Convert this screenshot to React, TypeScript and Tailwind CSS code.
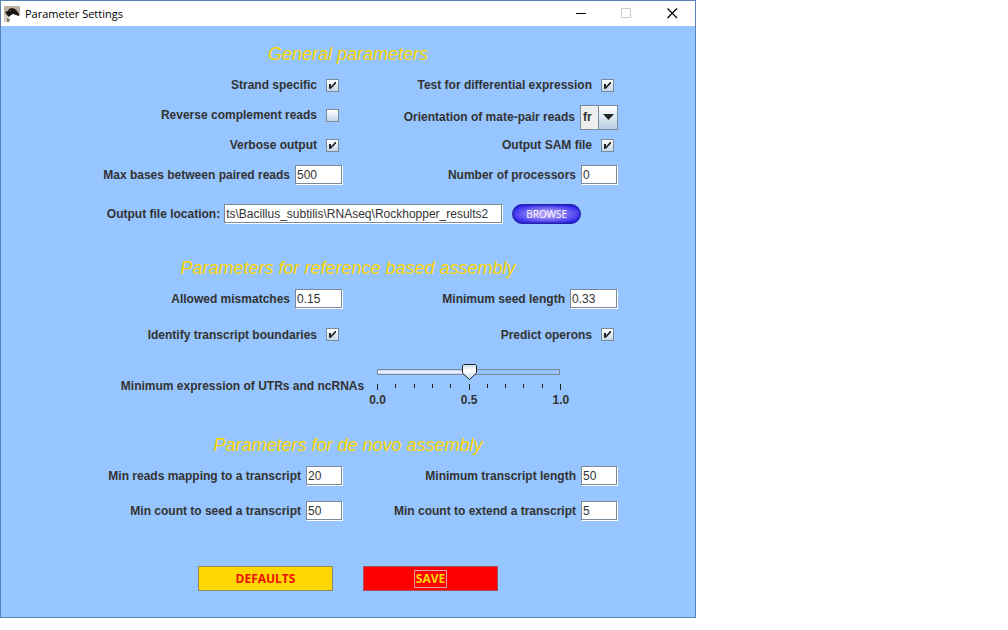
import { useEffect, useId, useRef, useState } from "react";
import type { ReactNode } from "react";

function Heading({ children }: { children: ReactNode }) {
  return (
    <h2 className="pt-px text-center text-[18px] leading-6 font-normal text-[#ffd700] italic">{children}</h2>
  );
}

function Pair({ children, tall = false }: { children: ReactNode; tall?: boolean }) {
  return (
    <div className={tall ? "grid h-[35px] grid-cols-2 items-center" : "grid h-[30px] grid-cols-2 items-center"}>
      {children}
    </div>
  );
}

function CheckField({ label, checked = false }: { label: string; checked?: boolean }) {
  const [on, setOn] = useState(checked);
  return (
    <label className="flex items-center justify-end gap-[9px] pr-1">
      {label}
      <span className="grid size-[13px]">
        <input
          type="checkbox"
          checked={on}
          onChange={(e) => setOn(e.target.checked)}
          className="col-start-1 row-start-1 size-[13px] appearance-none border border-[#7a8a99] bg-linear-to-b from-white to-[#c3d8ea]"
        />
        {on && (
          <svg viewBox="0 0 13 13" className="pointer-events-none col-start-1 row-start-1 size-[13px]" aria-hidden="true">
            <path d="M3 5h2v2.600L9 3h1v1.600L5 9.800H3z" fill="#222" />
          </svg>
        )}
      </span>
    </label>
  );
}

const fieldStyle =
  "h-5 border border-t-[#7a8a99] border-l-[#7a8a99] border-r-white border-b-white bg-white pl-px text-[12px] font-normal leading-4 text-[#333] shadow-[inset_-1px_-1px_0_#7a8a99] outline-none";

function TextField({ label, value, wide = false }: { label: string; value: string; wide?: boolean }) {
  const id = useId();
  return (
    <div className="flex items-center justify-end gap-[5px]">
      <label htmlFor={id}>{label}</label>
      <input
        id={id}
        type="text"
        defaultValue={value}
        className={wide ? `${fieldStyle} w-12` : `${fieldStyle} w-[37px]`}
      />
    </div>
  );
}

function OrientationField() {
  return (
    <div className="flex items-center justify-end gap-[5px] pt-1">
      <label htmlFor="orientation">Orientation of mate-pair reads</label>
      <span className="grid h-[25px] w-[38px]">
        <select
          id="orientation"
          defaultValue="fr"
          className="col-start-1 row-start-1 appearance-none border border-[#7a8a99] bg-[#eeeeee] pl-0.5 text-[12px] font-bold text-[#333] outline-none"
        >
          <option>fr</option>
          <option>rf</option>
          <option>ff</option>
        </select>
        <span className="pointer-events-none col-start-1 row-start-1 grid w-5 place-items-center justify-self-end border border-[#7a8a99] bg-linear-to-b from-white to-[#b8cfe5]">
          <svg viewBox="0 0 11 6" className="h-[6px] w-[11px]" aria-hidden="true">
            <path d="M0 0h11L5.500 6z" fill="#222" />
          </svg>
        </span>
      </span>
    </div>
  );
}

function OutputField() {
  const field = useRef<HTMLInputElement>(null);

  // Keep the end of the path, the most telling part, in view.
  useEffect(() => {
    if (field.current) field.current.scrollLeft = field.current.scrollWidth;
  }, []);

  return (
    <div className="flex items-center justify-center pt-3.5 pr-2">
      <label htmlFor="output">Output file location:</label>
      <input
        ref={field}
        id="output"
        type="text"
        defaultValue="ts\Bacillus_subtilis\RNAseq\Rockhopper_results2"
        className={`${fieldStyle} ml-1 w-[279px] pr-px`}
      />
      <button
        type="button"
        className="ml-[9px] h-5 w-[69px] rounded-full border border-[#2420a8] bg-[radial-gradient(ellipse_at_center,#bcaaf8_0%,#8a7cf4_35%,#3a30f0_75%,#2018d8_100%)] font-['Open_Sans','Noto_Sans',sans-serif] text-[10px] leading-4 font-normal text-white shadow-[inset_0_0_2px_#10108c]"
      >
        BROWSE
      </button>
    </div>
  );
}

function ExpressionSlider() {
  const [value, setValue] = useState(0.5);
  const ticks = Array.from({ length: 11 }, (_, i) => i);
  const x = 9 + value * 183;
  return (
    <div className="flex items-center justify-center pr-1.5">
      <label htmlFor="expression">Minimum expression of UTRs and ncRNAs</label>
      <div className="relative ml-[5px] w-[200px]">
        <svg viewBox="0 0 200 28" className="block h-7 w-[200px]" aria-hidden="true">
          <defs>
            <linearGradient id="fill" x1="0" y1="0" x2="0" y2="1">
              <stop offset="0" stopColor="#b9d2f0" />
              <stop offset="0.500" stopColor="#f4f9ff" />
              <stop offset="1" stopColor="#bcd4ef" />
            </linearGradient>
            <linearGradient id="thumb" x1="0" y1="0" x2="0" y2="1">
              <stop offset="0" stopColor="#c8dcf0" />
              <stop offset="0.400" stopColor="#ffffff" />
              <stop offset="1" stopColor="#c8dcf0" />
            </linearGradient>
          </defs>
          <rect x="8.500" y="5.500" width="182" height="5" fill="none" stroke="#7a8a99" />
          <rect x="9" y="6" width={x - 9} height="4" fill="url(#fill)" />
          <path d={`M${x - 7} 1.500l1-1h12l1 1v7.500L${x} 15.500L${x - 7} 9z`} fill="url(#thumb)" stroke="#222" />
          {ticks.map((i) => (
            <rect key={i} x={8 + Math.round(i * 18.3)} y="20" width="1" height={i % 5 === 0 ? 6 : 4} fill="#222" />
          ))}
        </svg>
        <input
          id="expression"
          type="range"
          min={0}
          max={1}
          step={0.01}
          value={value}
          onChange={(e) => setValue(Number(e.target.value))}
          className="absolute inset-x-0 top-0 h-4 w-full opacity-0"
        />
        <div className="flex justify-between leading-4" aria-hidden="true">
          <span>0.0</span>
          <span>0.5</span>
          <span>1.0</span>
        </div>
      </div>
    </div>
  );
}

function TitleBar() {
  return (
    <header className="flex h-[25px] items-center bg-white pl-[3px] text-black">
      <svg viewBox="0 0 16 16" className="size-4" aria-hidden="true">
        <rect width="16" height="16" fill="#bdb09f" />
        <rect y="9" width="5" height="7" fill="#d8cfc2" />
        <path d="M5 9l3-2 4 1 4 2v6H5l-1-2z" fill="#fff" />
        <path d="M1 6l3-1 1-2 3-1 3 1 2 2 2 3v2l-3-1-3-1-2 1-2 2-2-2-1-2z" fill="#17130f" />
        <path d="M3 12l3 1-1 3H3z" fill="#8a7766" />
        <path d="M6 4h1v1H6z" fill="#b8734a" />
      </svg>
      <h1 className="grow pl-[5px] font-['Open_Sans','Noto_Sans',sans-serif] text-[11px] leading-4 font-normal">
        Parameter Settings
      </h1>
      <button type="button" aria-label="Minimize" className="grid h-full w-[45px] place-items-center">
        <svg viewBox="0 0 11 11" className="size-[11px]" aria-hidden="true">
          <path d="M0 5.500h10" stroke="#000" />
        </svg>
      </button>
      <button type="button" aria-label="Maximize" disabled className="grid h-full w-[45px] place-items-center">
        <svg viewBox="0 0 11 11" className="size-[11px]" aria-hidden="true">
          <path d="M.5.5h9v9h-9z" fill="none" stroke="#ccc" />
        </svg>
      </button>
      <button type="button" aria-label="Close" className="grid h-full w-[46px] place-items-center">
        <svg viewBox="0 0 11 11" className="size-[11px]" aria-hidden="true">
          <path d="M.5.5l9.500 9.500m0-9.500l-9.500 9.500" stroke="#000" strokeWidth="1.200" />
        </svg>
      </button>
    </header>
  );
}

export default function App() {
  return (
    <div className="min-h-screen bg-white">
      <main className="w-full max-w-[696px] border border-[#5a83b5] bg-[#96c5ff] font-['Liberation_Sans',Arial,sans-serif] text-[12px] leading-4 font-bold text-[#333]">
        <TitleBar />
        <form className="pt-[15px]" onSubmit={(e) => e.preventDefault()}>
          <section>
            <Heading>General parameters</Heading>
            <div className="pt-1 pr-[77px] pl-[67px]">
              <Pair>
                <CheckField label="Strand specific" checked />
                <CheckField label="Test for differential expression" checked />
              </Pair>
              <Pair>
                <CheckField label="Reverse complement reads" />
                <OrientationField />
              </Pair>
              <Pair>
                <CheckField label="Verbose output" checked />
                <CheckField label="Output SAM file" checked />
              </Pair>
              <Pair>
                <TextField label="Max bases between paired reads" value="500" wide />
                <TextField label="Number of processors" value="0" />
              </Pair>
            </div>
            <OutputField />
          </section>

          <section className="pt-[31px]">
            <Heading>Parameters for reference based assembly</Heading>
            <div className="pt-1 pr-[77px] pl-[67px]">
              <Pair>
                <TextField label="Allowed mismatches" value="0.15" wide />
                <TextField label="Minimum seed length" value="0.33" wide />
              </Pair>
              <div className="pt-[3px]">
                <Pair tall>
                  <CheckField label="Identify transcript boundaries" checked />
                  <CheckField label="Predict operons" checked />
                </Pair>
              </div>
            </div>
            <div className="pt-3">
              <ExpressionSlider />
            </div>
          </section>

          <section className="pt-6">
            <Heading>Parameters for de novo assembly</Heading>
            <div className="pt-px pr-[77px] pl-[67px]">
              <Pair tall>
                <TextField label="Min reads mapping to a transcript" value="20" />
                <TextField label="Minimum transcript length" value="50" />
              </Pair>
              <Pair tall>
                <TextField label="Min count to seed a transcript" value="50" />
                <TextField label="Min count to extend a transcript" value="5" />
              </Pair>
            </div>
          </section>

          <div className="flex justify-center gap-[30px] pt-[38px] pb-[26px] font-['Open_Sans','Noto_Sans',sans-serif]">
            <button type="button" className="h-[25px] w-[135px] border border-[#8a8a6a] bg-[#ffd700] font-bold text-[#f01000]">
              DEFAULTS
            </button>
            <button type="submit" className="grid h-[25px] w-[135px] place-items-center border border-[#a05060] bg-[#ff0000] font-bold text-[#ffd700]">
              <span className="border border-[#e0a0a8] px-px">SAVE</span>
            </button>
          </div>
        </form>
      </main>
    </div>
  );
}
